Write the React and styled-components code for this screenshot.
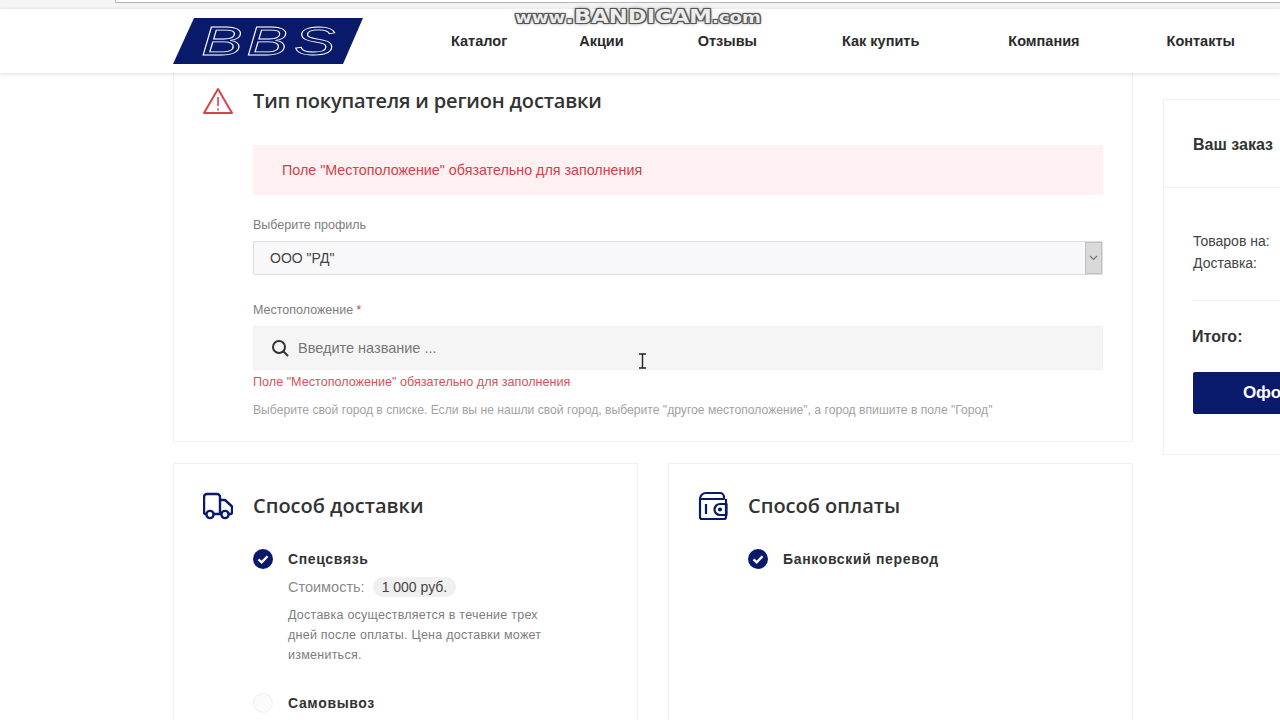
import React from 'react';
import styled, { createGlobalStyle } from 'styled-components';

const GlobalStyle = createGlobalStyle`
  html, body {
    margin: 0;
    height: 720px;
    overflow: hidden;
    background: #fff;
    font-family: "Liberation Sans", Arial, sans-serif;
    color: #333;
  }
  * { box-sizing: border-box; }
`;

const NAVY = '#0a1a6b';

const Page = styled.div`
  position: relative;
  width: 1280px;
  height: 720px;
  overflow: hidden;
`;

const BrowserStrip = styled.div`
  height: 9px;
  background: #f4f4f4;
  padding-left: 115px;
`;

const AddressBar = styled.div`
  height: 3px;
  background: #fff;
  border-bottom: 1px solid #b4b4b4;
  border-left: 1px solid #c8c8c8;
`;

const Header = styled.header`
  position: relative;
  z-index: 2;
  height: 64px;
  background: #fff;
  padding: 9px 0 0 173px;
  display: flex;
  align-items: flex-start;
  box-shadow: 0 1px 4px rgba(0, 0, 0, 0.14);
`;

const Nav = styled.nav`
  display: flex;
  margin: 13px 0 0 88px;
`;

const NavLink = styled.a`
  margin-left: ${(p) => p.$gap || 0}px;
  font-size: 14.5px;
  line-height: 20px;
  font-weight: 700;
  color: #2b2b2b;
  white-space: nowrap;
`;

const Watermark = styled.div`
  position: absolute;
  z-index: 3;
  left: 515px;
  top: 5px;
  font-family: "DejaVu Sans", sans-serif;
  font-weight: 700;
  font-size: 20px;
  line-height: 22px;
  color: #ececec;
  white-space: nowrap;
  transform: scaleX(1.135);
  transform-origin: left center;
  text-shadow: -1px -1px 0 #555, 1px -1px 0 #555, -1px 1px 0 #555, 1px 1px 0 #555, 0 0 4px #777, 0 0 2px #555;
  span { font-size: 16px; }
`;

const Layout = styled.div`
  display: flex;
  gap: 30px;
  padding-left: 173px;
`;

const MainColumn = styled.div`
  width: 960px;
  flex: none;
  display: flex;
  flex-direction: column;
  gap: 21px;
`;

const Card = styled.section`
  background: #fff;
  border: 1px solid #f0f0f0;
  border-top: ${(p) => (p.$flush ? 'none' : '1px solid #f0f0f0')};
  padding: ${(p) => (p.$flush ? '13px 29px 22px' : '27px 29px 26px')};
  min-height: ${(p) => p.$height || 0}px;
  flex: ${(p) => (p.$half ? '1 1 0' : 'none')};
`;

const CardHead = styled.div`
  display: flex;
  align-items: center;
  gap: 20px;
  height: 30px;
`;

const CardTitle = styled.h2`
  margin: 0;
  font-family: "Open Sans", sans-serif;
  font-weight: 600;
  font-size: 20px;
  line-height: 30px;
  letter-spacing: ${(p) => (p.$tight ? '-0.16px' : '0')};
  color: #333;
  white-space: nowrap;
`;

const CardBody = styled.div`
  padding-left: 50px;
`;

const Alert = styled.div`
  margin-top: 29px;
  height: 50px;
  padding-left: 29px;
  display: flex;
  align-items: center;
  background: #fff1f1;
  color: #d2404a;
  font-size: 14.3px;
`;

const FieldLabel = styled.div`
  margin-top: ${(p) => p.$top}px;
  font-size: 12.5px;
  line-height: 18px;
  color: #7d7d7d;
  i { font-style: normal; color: #d2404a; }
`;

const SelectBox = styled.div`
  margin-top: 7px;
  height: 34px;
  border: 1px solid #dcdcdc;
  border-radius: 2px;
  background: #f8f8fb;
  display: flex;
  align-items: center;
  justify-content: space-between;
  padding-left: 16px;
  font-size: 14px;
  color: #444;
`;

const SelectArrow = styled.div`
  width: 17px;
  height: 32px;
  background: #d9d9d9;
  border: 1px solid #c2c2c2;
  display: flex;
  align-items: center;
  justify-content: center;
  color: #777;
`;

const SearchBox = styled.div`
  margin-top: 7px;
  height: 44px;
  background: #f5f5f5;
  border: 1px solid #f0f0f0;
  display: flex;
  align-items: center;
  gap: 9px;
  padding-left: 17px;
  font-size: 14.5px;
  color: #777;
`;

const ErrorText = styled.div`
  margin-top: 3px;
  font-size: 12.6px;
  line-height: 18px;
  color: #d9505a;
`;

const HintText = styled.div`
  margin-top: 10px;
  font-size: 12.15px;
  line-height: 18px;
  color: #a2a2a2;
  white-space: nowrap;
`;

const PairRow = styled.div`
  display: flex;
  gap: 30px;
`;

const Option = styled.div`
  margin-top: ${(p) => p.$top}px;
  display: flex;
  align-items: center;
  gap: 15px;
  height: 20px;
`;

const OptionName = styled.div`
  font-size: 14px;
  font-weight: 700;
  color: #333;
  letter-spacing: 0.65px;
`;

const EmptyRadio = styled.div`
  width: 20px;
  height: 20px;
  border-radius: 50%;
  background: #fbfbfb;
  border: 1px solid #f0f0f0;
`;

const OptionInfo = styled.div`
  padding-left: 35px;
`;

const PriceRow = styled.div`
  margin-top: 8px;
  display: flex;
  align-items: center;
  gap: 8px;
  font-size: 14.5px;
  color: #8a8a8a;
`;

const PricePill = styled.span`
  height: 20px;
  line-height: 20px;
  padding: 0 9px;
  border-radius: 10px;
  background: #f0f0f0;
  font-size: 14px;
  color: #444;
`;

const OptionText = styled.p`
  margin: 8px 0 0;
  width: 270px;
  font-size: 12.5px;
  line-height: 20px;
  letter-spacing: 0.25px;
  color: #7d7d7d;
`;

const Sidebar = styled.aside`
  flex: none;
  width: 299px;
  height: 356px;
  margin-top: 26px;
  border: 1px solid #f0f0f0;
`;

const SideHead = styled.div`
  height: 88px;
  padding: 2px 29px 0;
  display: flex;
  align-items: center;
  border-bottom: 1px solid #eee;
  font-size: 16px;
  font-weight: 700;
  color: #333;
`;

const SideBody = styled.div`
  padding: 0 29px;
`;

const Totals = styled.div`
  padding: 42px 0 26px;
  border-bottom: 1px solid #eee;
  font-size: 14px;
  line-height: 22px;
  color: #444;
`;

const GrandTotal = styled.div`
  margin-top: 25px;
  margin-left: -1px;
  font-size: 16px;
  line-height: 22px;
  font-weight: 700;
  color: #333;
`;

const OrderButton = styled.button`
  display: block;
  width: 100%;
  height: 42px;
  margin-top: 24px;
  padding: 0;
  border: none;
  border-radius: 2px;
  background: ${NAVY};
  color: #fff;
  font-family: "Liberation Sans", Arial, sans-serif;
  font-weight: 700;
  font-size: 17px;
  white-space: nowrap;
`;

const TextCursor = styled.svg`
  position: absolute;
  z-index: 3;
  left: 638px;
  top: 353px;
`;

const Logo = () => (
  <svg width="190" height="46" viewBox="0 0 190 46">
    <polygon points="21,0 190,0 170,46 0,46" fill={NAVY} />
    <text transform="scale(1.55 1)" x="18.2 47.5 78" y="37" fontFamily="Liberation Sans" fontStyle="italic" fontSize="40" fill="none" stroke="#fff" strokeWidth="1" vectorEffect="non-scaling-stroke">BBS</text>
  </svg>
);

const AlertIcon = () => (
  <svg width="30" height="30" viewBox="0 0 30 30" fill="none" stroke="#d8434b" strokeWidth="2" strokeLinejoin="round">
    <path d="M15 3 L29 27 H1 Z" />
    <path d="M15 11 V20 M15 22.5 V24.5" strokeWidth="1.6" />
  </svg>
);

const TruckIcon = () => (
  <svg width="30" height="30" viewBox="0 0 30 30" fill="none" stroke={NAVY} strokeWidth="2.4" strokeLinejoin="round">
    <path d="M3 23 H2.5 a1.5 1.5 0 0 1 -1.5 -1.5 V6 a3 3 0 0 1 3 -3 H14 a3 3 0 0 1 3 3 V23 H11" />
    <path d="M17 9 H22 L29 15.5 V21.5 a1.5 1.5 0 0 1 -1.5 1.5 H26 M17 23 H18" />
    <circle cx="7" cy="23.5" r="3.6" />
    <circle cx="22" cy="23.5" r="3.6" />
  </svg>
);

const WalletIcon = () => (
  <svg width="30" height="30" viewBox="0 0 30 30" fill="none" stroke={NAVY} strokeWidth="2.2" strokeLinejoin="round">
    <path d="M2 8 a6 6 0 0 1 6 -6 H22 a4 4 0 0 1 4 4 V8 H2 V26 a2 2 0 0 0 2 2 H26 a2 2 0 0 0 2 -2 V8" />
    <path d="M28.5 13 H22 a5.5 5.5 0 0 0 0 11 H28.5 Z" />
    <path d="M8 13 V23" />
    <circle cx="22" cy="18.5" r="1" fill={NAVY} />
  </svg>
);

const SearchIcon = () => (
  <svg width="18" height="18" viewBox="0 0 18 18" fill="none" stroke="#333" strokeWidth="2" strokeLinecap="round">
    <circle cx="8" cy="8" r="6" />
    <path d="M12.5 12.5 L16.5 16.5" />
  </svg>
);

const CheckedRadio = () => (
  <svg width="20" height="20" viewBox="0 0 20 20">
    <circle cx="10" cy="10" r="10" fill={NAVY} />
    <path d="M5.5 10.3 L8.7 13.4 L14.5 7.2" fill="none" stroke="#fff" strokeWidth="2.4" />
  </svg>
);

const App = () => {
  return (
    <Page>
      <GlobalStyle />
      <BrowserStrip><AddressBar /></BrowserStrip>
      <Header>
        <Logo />
        <Nav>
          <NavLink>Каталог</NavLink>
          <NavLink $gap={72}>Акции</NavLink>
          <NavLink $gap={74}>Отзывы</NavLink>
          <NavLink $gap={85}>Как купить</NavLink>
          <NavLink $gap={89}>Компания</NavLink>
          <NavLink $gap={87}>Контакты</NavLink>
        </Nav>
      </Header>
      <Watermark><span>www</span>.BANDICAM<span>.com</span></Watermark>

      <Layout>
        <MainColumn>
          <Card $flush>
            <CardHead>
              <AlertIcon />
              <CardTitle $tight>Тип покупателя и регион доставки</CardTitle>
            </CardHead>
            <CardBody>
              <Alert>Поле "Местоположение" обязательно для заполнения</Alert>
              <FieldLabel $top={21}>Выберите профиль</FieldLabel>
              <SelectBox>
                ООО "РД"
                <SelectArrow>
                  <svg width="9" height="6" viewBox="0 0 9 6" fill="none" stroke="currentColor" strokeWidth="1.2"><path d="M1 1 L4.5 4.5 L8 1" /></svg>
                </SelectArrow>
              </SelectBox>
              <FieldLabel $top={26}>Местоположение <i>*</i></FieldLabel>
              <SearchBox>
                <SearchIcon />
                Введите название ...
              </SearchBox>
              <ErrorText>Поле "Местоположение" обязательно для заполнения</ErrorText>
              <HintText>Выберите свой город в списке. Если вы не нашли свой город, выберите "другое местоположение", а город впишите в поле "Город"</HintText>
            </CardBody>
          </Card>

          <PairRow>
            <Card $half $height={320}>
              <CardHead>
                <TruckIcon />
                <CardTitle>Способ доставки</CardTitle>
              </CardHead>
              <CardBody>
                <Option $top={28}>
                  <CheckedRadio />
                  <OptionName>Спецсвязь</OptionName>
                </Option>
                <OptionInfo>
                  <PriceRow>Стоимость: <PricePill>1 000 руб.</PricePill></PriceRow>
                  <OptionText>Доставка осуществляется в течение трех дней после оплаты. Цена доставки может измениться.</OptionText>
                </OptionInfo>
                <Option $top={28}>
                  <EmptyRadio />
                  <OptionName>Самовывоз</OptionName>
                </Option>
              </CardBody>
            </Card>
            <Card $half $height={320}>
              <CardHead>
                <WalletIcon />
                <CardTitle>Способ оплаты</CardTitle>
              </CardHead>
              <CardBody>
                <Option $top={28}>
                  <CheckedRadio />
                  <OptionName>Банковский перевод</OptionName>
                </Option>
              </CardBody>
            </Card>
          </PairRow>
        </MainColumn>

        <Sidebar>
          <SideHead>Ваш заказ</SideHead>
          <SideBody>
            <Totals>
              <div>Товаров на:</div>
              <div>Доставка:</div>
            </Totals>
            <GrandTotal>Итого:</GrandTotal>
            <OrderButton>Оформить заказ</OrderButton>
          </SideBody>
        </Sidebar>
      </Layout>

      <TextCursor width="9" height="16" viewBox="0 0 9 16" fill="none" stroke="#222" strokeWidth="1.4">
        <path d="M1 1 H8 M4.5 1 V15 M1 15 H8" />
      </TextCursor>
    </Page>
  );
};

export default App;
